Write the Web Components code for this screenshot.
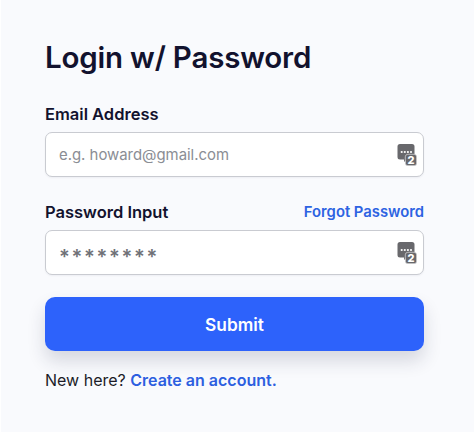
<!DOCTYPE html>
<html lang="en"><head><meta charset="utf-8"><title>Login</title>
<style>
html,body{margin:0;padding:0;background:#fff;height:100%;overflow:hidden}
body{font-family:Inter,"Liberation Sans",sans-serif;color:#12122e}
</style></head><body>
<login-panel>
  <h1 slot="title">Login w/ Password</h1>
  <form-field label="Email Address"><field-input placeholder="e.g. howard@gmail.com"></field-input></form-field>
  <form-field label="Password Input" link="Forgot Password" style="margin-bottom:22px"><field-input value="********"></field-input></form-field>
  <submit-button>Submit</submit-button>
  <signup-note>New here? <a slot="link">Create an account.</a></signup-note>
</login-panel>
<script>
class LoginPanel extends HTMLElement{constructor(){super();this.attachShadow({mode:'open'}).innerHTML=`<style>
:host{display:flex;flex-direction:column;box-sizing:border-box;width:473px;height:432px;margin-left:1px;background:#f9fafd;padding:39px 50px 0 44px}
::slotted(h1){margin:0 0 29px;font:600 29.500px/36px Inter,"Liberation Sans",sans-serif;letter-spacing:-.2px;color:#12122e}
</style><slot name="title"></slot><slot></slot>`}}
class FormField extends HTMLElement{constructor(){super();this.attachShadow({mode:'open'}).innerHTML=`<style>
:host{display:block;margin-bottom:25px}
.row{display:flex;justify-content:space-between;align-items:center;height:20px;margin-bottom:8px;font:600 16.500px/20px Inter,"Liberation Sans",sans-serif;color:#12122e}
.link{font-size:14.800px;color:#2d63e2;font-weight:600}
</style><div class="row"><span class="label"></span><span class="link"></span></div><slot></slot>`;
this.shadowRoot.querySelector('.label').textContent=this.getAttribute('label');
this.shadowRoot.querySelector('.link').textContent=this.getAttribute('link')||''}}
class FieldInput extends HTMLElement{constructor(){super();const v=this.getAttribute('value'),p=this.getAttribute('placeholder');this.attachShadow({mode:'open'}).innerHTML=`<style>
:host{display:flex;align-items:center;justify-content:space-between;box-sizing:border-box;height:45px;background:#fff;border:1px solid #c9cbd1;border-radius:7px;padding:0 6px 0 13px;font:400 14.900px/20px Inter,"Liberation Sans",sans-serif;color:#8a8d94;box-shadow:0 1px 2px rgba(20,20,50,.05)}
.val{color:#6f7177;letter-spacing:1.700px;font-size:20px;font-weight:600;padding-top:9px}
svg{display:block;flex:none}
</style><span class="${v?'val':'ph'}">${v||p}</span>
<svg width="20" height="23" viewBox="0 0 20 23" aria-hidden="true">
<path fill="#68686c" d="M3 1h12a2.500 2.500 0 0 1 2.500 2.500V14a2.500 2.500 0 0 1-2.500 2.500H9.500L7 19v-2.500H3A2.500 2.500 0 0 1 .5 14V3.500A2.500 2.500 0 0 1 3 1z"/>
<g fill="#fff"><circle cx="4.700" cy="9" r="1.100"/><circle cx="7.800" cy="9" r="1.100"/><circle cx="10.900" cy="9" r="1.100"/><circle cx="14" cy="9" r="1.100"/></g>
<rect x="8.300" y="11.300" width="11.400" height="11.400" rx="2.500" fill="#68686c" stroke="#f2f2f4" stroke-width=".6"/>
<text x="14" y="21.200" text-anchor="middle" font-family="Inter,Liberation Sans,sans-serif" font-weight="800" font-size="11" fill="#fff">2</text>
</svg>`}}
class SubmitButton extends HTMLElement{constructor(){super();this.attachShadow({mode:'open'}).innerHTML=`<style>
:host{display:flex;align-items:center;justify-content:center;box-sizing:border-box;height:54px;padding-top:2px;background:#2d62fb;border-radius:10px;color:#fff;font:600 17.300px/20px Inter,"Liberation Sans",sans-serif;box-shadow:0 10px 18px rgba(30,40,70,.16);margin-bottom:19px}
</style><slot></slot>`}}
class SignupNote extends HTMLElement{constructor(){super();this.attachShadow({mode:'open'}).innerHTML=`<style>
:host{display:block;font:400 16px/20px Inter,"Liberation Sans",sans-serif;color:#1c1c28}
::slotted(a){color:#2d5fe0;font-weight:600}
</style><slot></slot><slot name="link"></slot>`}}
customElements.define('login-panel',LoginPanel);
customElements.define('form-field',FormField);
customElements.define('field-input',FieldInput);
customElements.define('submit-button',SubmitButton);
customElements.define('signup-note',SignupNote);
</script>
</body></html>
